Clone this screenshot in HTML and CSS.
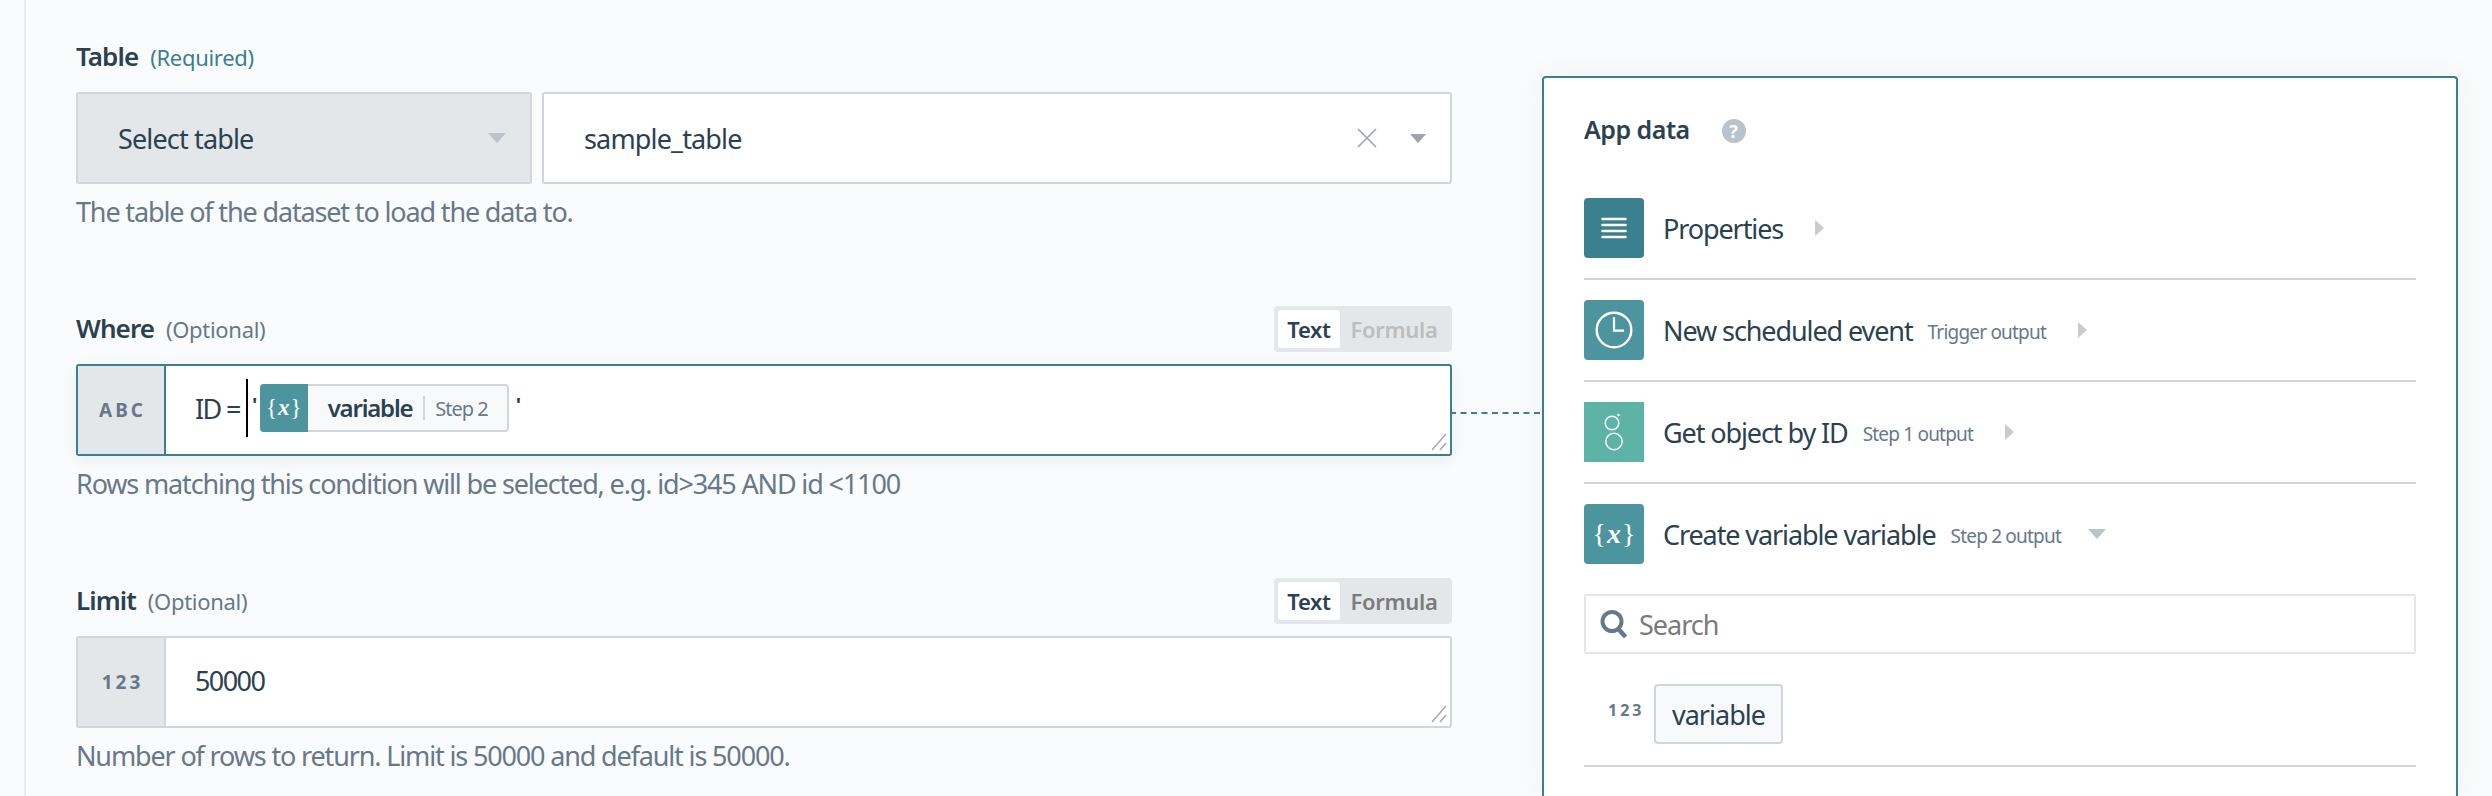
FILE: index.html
```html
<!DOCTYPE html>
<html>
<head>
    <meta charset="utf-8"/>
    <title>Load data</title>
    <link rel="stylesheet" href="styles.css">
</head>

<body>
<div class="page">
    <div class="form">
        <div class="field">
            <div class="field-head">
                <label class="name">Table <span class="req">(Required)</span></label>
            </div>
            <div class="pair">
                <div class="picker picker-grey">
                    <span>Select table</span>
                    <i class="arrow arrow-light"></i>
                </div>
                <div class="picker">
                    <span>sample_table</span>
                    <svg class="clear" width="22" height="22" viewBox="0 0 22 22"><path d="M2 2l18 18M20 2L2 20" stroke="#9aa6ae" stroke-width="1.6" fill="none"/></svg>
                    <i class="arrow"></i>
                </div>
            </div>
            <p class="help">The table of the dataset to load the data to.</p>
        </div>

        <div class="field">
            <div class="field-head">
                <label class="name">Where <span class="opt">(Optional)</span></label>
                <div class="toggle">
                    <span class="on">Text</span>
                    <span class="off off-dim">Formula</span>
                </div>
            </div>
            <div class="input input-active">
                <div class="type">ABC</div>
                <div class="value">
                    <span>ID =</span>
                    <span class="caret"></span>
                    <span class="quote">'</span>
                    <span class="pill">
                        <span class="pill-icon"><span class="fx">{<em>x</em>}</span></span>
                        <b>variable</b>
                        <span class="pill-step">Step 2</span>
                    </span>
                    <span class="quote">'</span>
                </div>
                <svg class="grip" width="16" height="18" viewBox="0 0 16 18"><path d="M1 17L15 1M9 17l6-7" stroke="#a9a9a9" stroke-width="1.5" fill="none"/></svg>
            </div>
            <p class="help">Rows matching this condition will be selected, e.g. id&gt;345 AND id &lt;1100</p>
        </div>

        <div class="field">
            <div class="field-head">
                <label class="name">Limit <span class="opt">(Optional)</span></label>
                <div class="toggle">
                    <span class="on">Text</span>
                    <span class="off">Formula</span>
                </div>
            </div>
            <div class="input">
                <div class="type">123</div>
                <div class="value">50000</div>
                <svg class="grip" width="16" height="18" viewBox="0 0 16 18"><path d="M1 17L15 1M9 17l6-7" stroke="#a9a9a9" stroke-width="1.5" fill="none"/></svg>
            </div>
            <p class="help">Number of rows to return. Limit is 50000 and default is 50000.</p>
        </div>
    </div>

    <div class="panel">
        <div class="panel-head">
            <h3>App data</h3>
            <span class="q">?</span>
        </div>

        <div class="row">
            <span class="badge badge-dark">
                <svg width="26" height="22" viewBox="0 0 26 22"><path d="M1.500 2h23M1.500 8h23M1.500 14h23M1.500 20h23" stroke="#fff" stroke-width="2.6" stroke-linecap="round"/></svg>
            </span>
            <span class="row-title">Properties</span>
            <i class="tri"></i>
        </div>
        <div class="row">
            <span class="badge">
                <svg width="40" height="40" viewBox="0 0 40 40"><circle cx="20" cy="20" r="17.300" stroke="#fff" stroke-width="2.400" fill="none"/><path d="M20 7.300v13.300h10" stroke="#fff" stroke-width="2.200" fill="none"/></svg>
            </span>
            <span class="row-title">New scheduled event</span>
            <span class="row-sub">Trigger output</span>
            <i class="tri"></i>
        </div>
        <div class="row">
            <span class="badge badge-green">
                <svg width="20" height="40" viewBox="0 0 20 40"><circle cx="8" cy="11" r="6.800" stroke="#fff" stroke-width="1.400" fill="none"/><circle cx="10" cy="29.500" r="8.200" stroke="#fff" stroke-width="1.400" fill="none"/><circle cx="14.500" cy="3" r="1.200" fill="#fff"/></svg>
            </span>
            <span class="row-title">Get object by ID</span>
            <span class="row-sub">Step 1 output</span>
            <i class="tri"></i>
        </div>
        <div class="row row-open">
            <span class="badge"><span class="fx fx-big">{<em>x</em>}</span></span>
            <span class="row-title">Create variable variable</span>
            <span class="row-sub">Step 2 output</span>
            <i class="arrow arrow-light"></i>
        </div>

        <div class="search">
            <svg width="29" height="28" viewBox="0 0 29 28"><circle cx="12" cy="11.500" r="9.500" stroke="#66798a" stroke-width="4" fill="none"/><path d="M18.500 19l7 8" stroke="#66798a" stroke-width="4.500" fill="none"/></svg>
            <span>Search</span>
        </div>

        <div class="result">
            <span class="result-type">123</span>
            <span class="chip">variable</span>
        </div>
        <div class="rule"></div>
    </div>
</div>
</body>
</html>
```

FILE: styles.css
```css
* {
    margin: 0;
    padding: 0;
    box-sizing: border-box;
}
html, body {
    height: 100%;
    overflow: hidden;
}
body {
    background: #fafbfd;
    color: #2a4250;
    font-family: "Noto Sans", "Liberation Sans", sans-serif;
    font-size: 27px;
}
.page {
    display: flex;
    align-items: flex-start;
    height: 796px;
    padding-left: 24px;
}

/* left form */
.form {
    display: flex;
    flex-direction: column;
    gap: 76px;
    width: 1428px;
    height: 796px;
    padding: 34px 0 0 50px;
    border-left: 2px solid #e8ebef;
}
.field-head {
    display: flex;
    justify-content: space-between;
    align-items: center;
    height: 46px;
    margin-bottom: 12px;
}
.name {
    padding-bottom: 2px;
    font-size: 26px;
    font-weight: 600;
    letter-spacing: -0.9px;
}
.req, .opt {
    margin-left: 6px;
    font-size: 22px;
    font-weight: 400;
    letter-spacing: -0.3px;
}
.req {
    color: #3a808e;
}
.opt {
    color: #66798a;
}
.help {
    height: 35px;
    margin-top: 11px;
    line-height: 34px;
    color: #66798a;
    letter-spacing: -1.15px;
}

.pair {
    display: flex;
    gap: 10px;
}
.picker {
    display: flex;
    align-items: center;
    flex: 1;
    height: 92px;
    padding: 0 24px 0 40px;
    background: #fff;
    border: 2px solid #d1d6dd;
    border-radius: 3px;
    letter-spacing: -0.85px;
}
.picker span {
    flex: 1;
}
.picker-grey {
    flex: 0 0 456px;
    background: #e4e7ea;
}
.clear {
    margin-right: 32px;
}
.arrow {
    width: 0;
    height: 0;
    border-left: 8px solid transparent;
    border-right: 8px solid transparent;
    border-top: 9px solid #98a6af;
}
.arrow-light {
    border-left-width: 9px;
    border-right-width: 9px;
    border-top: 10px solid #bcc4cb;
}

.toggle {
    display: flex;
    align-items: center;
    height: 46px;
    padding: 4px;
    background: #e4e7ea;
    border-radius: 4px;
    font-size: 22px;
    font-weight: 600;
    letter-spacing: -0.3px;
}
.toggle span {
    display: flex;
    align-items: center;
    justify-content: center;
    height: 38px;
    border-radius: 3px;
}
.on {
    width: 62px;
    background: #fff;
}
.off {
    width: 108px;
    color: #7b7b7b;
}
.off-dim {
    color: #bdbdbd;
}

.input {
    position: relative;
    display: flex;
    height: 92px;
    background: #fff;
    border: 2px solid #d1d6dd;
    border-radius: 3px;
}
.input-active {
    border-color: #3a808e;
    box-shadow: 0 4px 14px rgba(42, 66, 80, 0.08);
}
/* dashed link over to the panel */
.input-active:after {
    content: "";
    position: absolute;
    left: 100%;
    top: 46px;
    width: 90px;
    border-top: 2px dashed #3a808e;
}
.type {
    display: flex;
    align-items: center;
    justify-content: center;
    flex: 0 0 88px;
    padding-left: 3px;
    background: #e4e7ea;
    border-right: 2px solid #d1d6dd;
    color: #66798a;
    font-size: 19px;
    font-weight: 700;
    letter-spacing: 3px;
}
.input-active .type {
    border-right-color: #3a808e;
}
.value {
    display: flex;
    align-items: center;
    flex: 1;
    padding: 0 0 4px 29px;
    letter-spacing: -1.6px;
}
.caret {
    width: 2px;
    height: 58px;
    margin: 0 4px 0 6px;
    background: #000;
}
.quote {
    font-weight: 700;
    font-size: 20px;
    margin-top: -8px;
}
.pill {
    display: flex;
    align-items: center;
    height: 48px;
    margin: 0 7px 0 4px;
    background: #f8f9fb;
    border: 2px solid #d1d6dd;
    border-left: 0;
    border-radius: 4px;
}
.pill-icon {
    display: flex;
    align-items: center;
    justify-content: center;
    width: 48px;
    height: 48px;
    margin: -2px 0;
    background: #4d959e;
    border-radius: 4px 0 0 4px;
}
.pill b {
    margin-left: 20px;
    padding-right: 11px;
    border-right: 2px solid #d1d6dd;
    font-size: 24px;
    font-weight: 600;
    line-height: 24px;
    letter-spacing: -1.2px;
}
.pill-step {
    margin: 0 19px 0 10px;
    color: #66798a;
    font-size: 20px;
    letter-spacing: -1px;
}
.fx {
    color: #fff;
    font-family: "Liberation Serif", serif;
    font-size: 23px;
    letter-spacing: 0;
}
.fx em {
    font-weight: 700;
    margin: 0 1px;
}
.fx-big {
    font-size: 28px;
}
.grip {
    position: absolute;
    right: 3px;
    bottom: 3px;
}

/* right panel */
.panel {
    flex: 0 0 916px;
    height: 720px;
    margin: 76px 0 0 90px;
    padding: 0 40px;
    background: #fff;
    border: 2px solid #3a808e;
    border-bottom: 0;
    border-radius: 4px 4px 0 0;
    box-shadow: 0 0 30px rgba(42, 66, 80, 0.06);
}
.panel-head {
    display: flex;
    align-items: center;
    gap: 32px;
    height: 100px;
    padding-top: 2px;
}
.panel-head h3 {
    font-size: 25px;
    font-weight: 600;
    letter-spacing: -0.5px;
}
.q {
    display: flex;
    align-items: center;
    justify-content: center;
    width: 24px;
    height: 24px;
    margin-top: 4px;
    background: #b9c3cc;
    border-radius: 50%;
    color: #fff;
    font-size: 18px;
    font-weight: 700;
}
.row {
    display: flex;
    align-items: center;
    height: 102px;
    padding: 20px 0;
    border-bottom: 2px solid #d1d6dd;
}
.row-open {
    height: 80px;
    padding-bottom: 0;
    border-bottom: 0;
}
.badge {
    display: flex;
    align-items: center;
    justify-content: center;
    flex: 0 0 60px;
    height: 60px;
    margin-right: 19px;
    background: #4d959e;
    border-radius: 4px;
}
.badge-dark {
    background: #3a808e;
}
.badge-green {
    background: #5eb3a7;
    border-radius: 0;
}
.row-title {
    letter-spacing: -1.1px;
}
.row-sub {
    margin-left: 15px;
    padding-top: 4px;
    color: #66798a;
    font-size: 19px;
    letter-spacing: -0.8px;
}
.tri {
    width: 0;
    height: 0;
    margin-left: 32px;
    border-top: 8px solid transparent;
    border-bottom: 8px solid transparent;
    border-left: 9px solid #cbcbcb;
}
.row .arrow {
    margin-left: 27px;
}
.search {
    display: flex;
    align-items: center;
    gap: 10px;
    height: 60px;
    margin-top: 30px;
    padding-left: 14px;
    background: #fff;
    border: 2px solid #e4e7ea;
    border-radius: 3px;
    color: #7b7b7b;
    letter-spacing: -1px;
}
.result {
    display: flex;
    align-items: center;
    gap: 10px;
    margin-top: 30px;
    padding-left: 24px;
}
.result-type {
    width: 36px;
    margin-bottom: 8px;
    color: #66798a;
    font-size: 16px;
    font-weight: 700;
    letter-spacing: 3px;
}
.chip {
    display: flex;
    align-items: center;
    height: 60px;
    padding: 0 16px;
    background: #f8f9fb;
    border: 2px solid #d1d6dd;
    border-radius: 4px;
    letter-spacing: -1px;
}
.rule {
    height: 2px;
    margin-top: 21px;
    background: #d1d6dd;
}
```
